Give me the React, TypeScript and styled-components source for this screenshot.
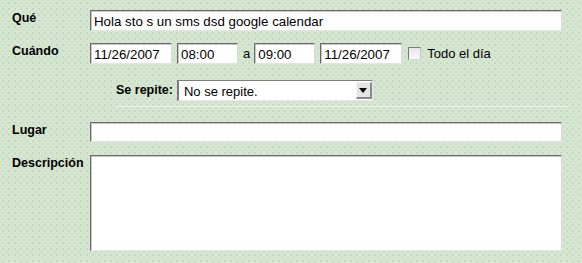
import * as React from "react";
import styled, { createGlobalStyle } from "styled-components";

const GlobalStyle = createGlobalStyle`
  html, body {
    margin: 0;
    padding: 0;
  }
  body {
    background-color: #d5e6d1;
    background-image:
      radial-gradient(circle, rgba(120, 150, 115, 0.16) 0.7px, transparent 1px),
      radial-gradient(circle, rgba(120, 150, 115, 0.1) 0.7px, transparent 1px);
    background-size: 6px 6px, 6px 6px;
    background-position: 0 0, 3px 3px;
    font-family: "Liberation Sans", Arial, sans-serif;
    color: #000;
  }
`;

const Form = styled.form`
  width: 582px;
  height: 263px;
  box-sizing: border-box;
  padding: 10px 0 0 12px;
  display: flex;
  flex-direction: column;
`;

const Row = styled.div<{ $top?: number; $indent?: number; $center?: boolean }>`
  display: flex;
  align-items: ${(p) => (p.$center ? "center" : "flex-start")};
  margin-top: ${(p) => p.$top ?? 0}px;
  padding-left: ${(p) => p.$indent ?? 0}px;
`;

const Label = styled.label`
  width: 78px;
  flex-shrink: 0;
  font-size: 12.5px;
  font-weight: bold;
  line-height: 15px;
  padding-top: 1px;
`;

const InlineLabel = styled.span`
  font-size: 12.5px;
  font-weight: bold;
  line-height: 15px;
  margin-right: 4px;
`;

const Field = styled.input<{ $w: number; $h?: number }>`
  box-sizing: border-box;
  width: ${(p) => p.$w}px;
  height: ${(p) => p.$h ?? 21}px;
  margin: 0;
  padding: 2px 3px 0 3px;
  border: 1px solid;
  border-color: #6a6a6a #d9d9d9 #e4e4e4 #6a6a6a;
  box-shadow: inset 1px 1px 0 #c8c8c8;
  background: #fff;
  font-family: "Liberation Sans", Arial, sans-serif;
  font-size: 13.3px;
  color: #000;
  outline: none;
`;

const Area = styled.textarea`
  box-sizing: border-box;
  width: 472px;
  height: 96px;
  margin: 0;
  padding: 3px;
  border: 1px solid;
  border-color: #6a6a6a #d9d9d9 #e4e4e4 #6a6a6a;
  box-shadow: inset 1px 1px 0 #c8c8c8;
  background: #fff;
  font-family: "Liberation Sans", Arial, sans-serif;
  font-size: 13px;
  resize: none;
  outline: none;
`;

const Gap = styled.span<{ $w: number }>`
  display: inline-block;
  width: ${(p) => p.$w}px;
  flex-shrink: 0;
`;

const Plain = styled.span`
  font-size: 13px;
  line-height: 15px;
  align-self: center;
`;

const Check = styled.span`
  box-sizing: border-box;
  width: 13px;
  height: 13px;
  align-self: center;
  border: 1px solid;
  border-color: #7a7a7a #c4c4c4 #d6d6d6 #7a7a7a;
  background: linear-gradient(#e6e6e6, #fafafa);
  margin: 0 6px 0 0;
`;

const Select = styled.div`
  box-sizing: border-box;
  width: 196px;
  height: 21px;
  display: flex;
  align-items: stretch;
  background: #fff;
  border-style: solid;
  border-width: 1px 1px 1px 2px;
  border-color: #7c7c7c #e8e8e8 #e8e8e8 #7c7c7c;
`;

const SelectText = styled.span`
  flex: 1;
  padding: 1px 0 0 5px;
  font-size: 13px;
  line-height: 19px;
`;

const Arrow = styled.span`
  box-sizing: border-box;
  width: 16px;
  margin: 1px 0 1px 0;
  display: flex;
  align-items: center;
  justify-content: center;
  background: #e4e4e4;
  border-style: solid;
  border-width: 1px 2px 2px 1px;
  border-color: #f4f4f4 #8a8a8a #8a8a8a #f4f4f4;
  &::after {
    content: "";
    width: 0;
    height: 0;
    border-left: 4px solid transparent;
    border-right: 4px solid transparent;
    border-top: 5px solid #000;
  }
`;

const Separator = styled.div`
  margin: 5px 0 0 104px;
  width: 454px;
  height: 1px;
  background: #eef6ec;
`;

export default function App() {
  return (
    <>
      <GlobalStyle />
      <Form onSubmit={(e) => e.preventDefault()}>
        <Row>
          <Label>Qué</Label>
          <Field $w={472} defaultValue="Hola sto s un sms dsd google calendar" />
        </Row>
        <Row $top={12}>
          <Label>Cuándo</Label>
          <Field $w={82} defaultValue="11/26/2007" />
          <Gap $w={5} />
          <Field $w={61} defaultValue="08:00" />
          <Gap $w={5} />
          <Plain>a</Plain>
          <Gap $w={4} />
          <Field $w={61} defaultValue="09:00" />
          <Gap $w={5} />
          <Field $w={82} defaultValue="11/26/2007" />
          <Gap $w={6} />
          <Check />
          <Plain>Todo el día</Plain>
        </Row>
        <Row $top={16} $indent={104} $center>
          <InlineLabel>Se repite:</InlineLabel>
          <Select role="combobox">
            <SelectText>No se repite.</SelectText>
            <Arrow />
          </Select>
        </Row>
        <Separator />
        <Row $top={15}>
          <Label>Lugar</Label>
          <Field $w={472} $h={20} />
        </Row>
        <Row $top={13}>
          <Label>Descripción</Label>
          <Area />
        </Row>
      </Form>
    </>
  );
}
